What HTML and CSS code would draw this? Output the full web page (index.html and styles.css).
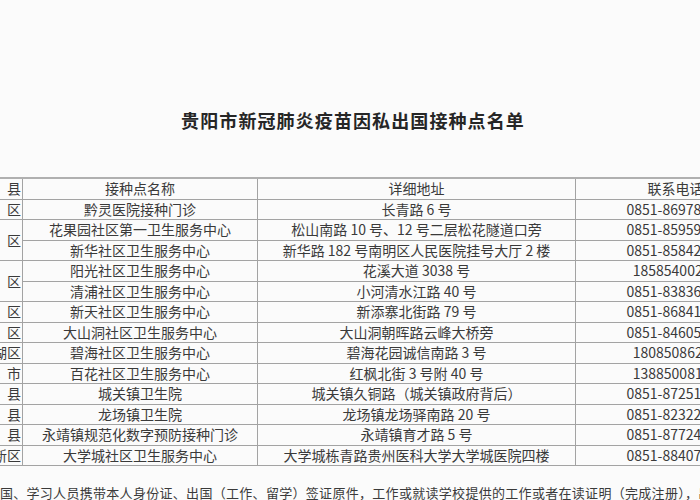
FILE: index.html
```html
<!DOCTYPE html>
<html lang="zh-CN">
<head>
<meta charset="utf-8">
<link rel="stylesheet" href="styles.css">
</head>
<body>
<div class="page">
  <h1 class="title">贵阳市新冠肺炎疫苗因私出国接种点名单</h1>
  <table class="sites">
    <colgroup>
      <col class="c-area"><col class="c-name"><col class="c-addr"><col class="c-tel">
    </colgroup>
    <thead>
      <tr><th class="area">区县</th><th>接种点名称</th><th>详细地址</th><th>联系电话</th></tr>
    </thead>
    <tbody>
      <tr><td class="area">云岩区</td><td>黔灵医院接种门诊</td><td>长青路 6 号</td><td>0851-86978171</td></tr>
      <tr><td class="area" rowspan="2">南明区</td><td>花果园社区第一卫生服务中心</td><td>松山南路 10 号、12 号二层松花隧道口旁</td><td>0851-85959066</td></tr>
      <tr><td>新华社区卫生服务中心</td><td>新华路 182 号南明区人民医院挂号大厅 2 楼</td><td>0851-85842066</td></tr>
      <tr><td class="area" rowspan="2">花溪区</td><td>阳光社区卫生服务中心</td><td>花溪大道 3038 号</td><td>18585400256</td></tr>
      <tr><td>清浦社区卫生服务中心</td><td>小河清水江路 40 号</td><td>0851-83836561</td></tr>
      <tr><td class="area">乌当区</td><td>新天社区卫生服务中心</td><td>新添寨北街路 79 号</td><td>0851-86841788</td></tr>
      <tr><td class="area">白云区</td><td>大山洞社区卫生服务中心</td><td>大山洞朝晖路云峰大桥旁</td><td>0851-84605689</td></tr>
      <tr><td class="area">观山湖区</td><td>碧海社区卫生服务中心</td><td>碧海花园诚信南路 3 号</td><td>18085086288</td></tr>
      <tr><td class="area">清镇市</td><td>百花社区卫生服务中心</td><td>红枫北街 3 号附 40 号</td><td>13885008166</td></tr>
      <tr><td class="area">开阳县</td><td>城关镇卫生院</td><td>城关镇久铜路（城关镇政府背后）</td><td>0851-87251234</td></tr>
      <tr><td class="area">修文县</td><td>龙场镇卫生院</td><td>龙场镇龙场驿南路 20 号</td><td>0851-82322066</td></tr>
      <tr><td class="area">息烽县</td><td>永靖镇规范化数字预防接种门诊</td><td>永靖镇育才路 5 号</td><td>0851-87724688</td></tr>
      <tr><td class="area">贵安新区</td><td>大学城社区卫生服务中心</td><td>大学城栋青路贵州医科大学大学城医院四楼</td><td>0851-88407966</td></tr>
    </tbody>
  </table>
  <p class="note">因私出国、学习人员携带本人身份证、出国（工作、留学）签证原件，工作或就读学校提供的工作或者在读证明（完成注册），出国行程单等材料前往接种。</p>
</div>
</body>
</html>
```
FILE: styles.css
```css
html, body {
  margin: 0;
  padding: 0;
  overflow: hidden;
  background: #fbfbfb;
}
.page {
  width: 700px;
  height: 500px;
  overflow: hidden;
  font-family: "Noto Sans CJK SC", "Noto Sans", sans-serif;
  color: #3a3a3a;
}
.title {
  margin: 108px 0 0 6px;
  font-size: 18px;
  line-height: 24px;
  font-weight: 700;
  letter-spacing: 1.1px;
  text-align: center;
  color: #262626;
}
.sites {
  margin: 45px 0 0 -37px;
  border-collapse: collapse;
  table-layout: fixed;
  width: 812px;
  font-size: 14px;
}
.c-area { width: 59px; }
.c-name { width: 235px; }
.c-addr { width: 318px; }
.c-tel { width: 200px; }
.sites th, .sites td {
  border: 1px solid #a3a3a3;
  height: 19.5px;
  padding: 0;
  line-height: 19px;
  text-align: center;
  white-space: nowrap;
  overflow: hidden;
  font-weight: 400;
}
.sites thead th {
  border-top: 2px solid #b0b0b0;
}
.sites .area {
  text-align: justify;
  text-align-last: justify;
  white-space: normal;
  padding: 0 1px;
}
.note {
  margin: 18px 0 0 -40px;
  width: 800px;
  font-size: 13px;
  line-height: 18px;
  white-space: nowrap;
  letter-spacing: 0.3px;
  color: #3a3a3a;
}
```
